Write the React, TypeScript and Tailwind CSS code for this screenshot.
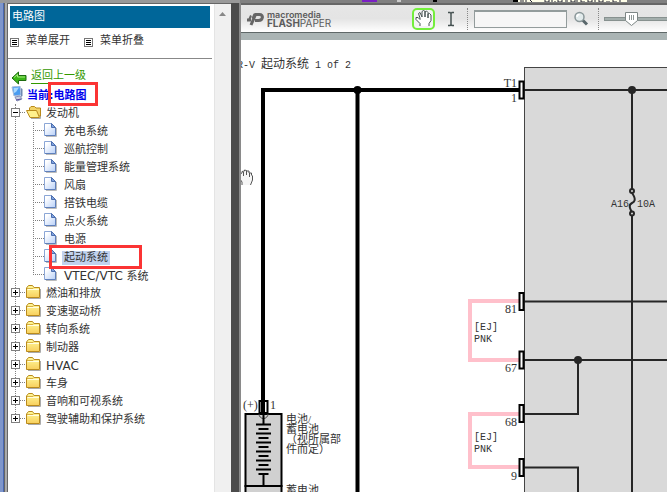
import { useState } from "react";
import clsx from "clsx";

const engineItems = [
  "充电系统",
  "巡航控制",
  "能量管理系统",
  "风扇",
  "搭铁电缆",
  "点火系统",
  "电源",
  "起动系统",
  "VTEC/VTC 系统",
];

const closedFolders = [
  "燃油和排放",
  "变速驱动桥",
  "转向系统",
  "制动器",
  "HVAC",
  "车身",
  "音响和可视系统",
  "驾驶辅助和保护系统",
];

export default function App() {
  const [selected, setSelected] = useState("起动系统");

  return (
    <div className="flex h-screen flex-col overflow-hidden bg-white font-['DejaVu_Sans','Noto_Sans_CJK_SC',sans-serif] text-[11px] text-[#333]">
      <TopStrip />
      <div className="flex min-h-0 flex-1">
        <div className="w-1 shrink-0 border-r border-[#4a68b0] bg-[#7f96cb]" />
        <div className="w-1 shrink-0 border-x border-[#666] bg-[#aaa]" />
        <Sidebar selected={selected} onSelect={setSelected} />
        <div className="w-2 shrink-0 bg-[#4b4b4b]" />
        <div className="w-0.5 shrink-0 bg-[#8a8a8a]" />
        <main className="flex min-w-0 flex-1 flex-col">
          <Toolbar />
          <div className="h-[7px] shrink-0 bg-[#aab4b4]" />
          <Diagram />
        </main>
      </div>
    </div>
  );
}

function TopStrip() {
  return (
    <div className="flex h-[3px] shrink-0 bg-[#999]">
      <div className="w-60 shrink-0" />
      <div className="flex flex-1 bg-[#808080]">
        <div className="ml-[122px] h-0.5 w-[15px] bg-[#7a1fc4]" />
        <div className="ml-5 h-0.5 w-1 bg-[#ccc]" />
        <div className="ml-8 h-0.5 w-1 bg-black" />
        <div className="ml-[76px] h-0.5 w-[5px] bg-black" />
        <svg className="h-0.5 w-[109px] bg-[#fffee8]">
          <path
            d="M2 1h4M8 0v2M12 0l2 2M27 0v2h4v-2M34 0v2M38 2h-2M40 0v2h4v-2M47 1h3M53 0v2h4v-2M59 0v2M63 0v2h4M70 0v2h4v-2M77 0v2M81 0v2h4v-2M88 2h4M95 0v2h4M102 0v2"
            stroke="#223"
            fill="none"
          />
        </svg>
      </div>
    </div>
  );
}

/* SIDEBAR */
function Sidebar({
  selected,
  onSelect,
}: {
  selected: string;
  onSelect: (label: string) => void;
}) {
  return (
    <aside className="flex w-[223px] shrink-0 border-t border-[#666]">
      <div className="min-w-0 flex-1">
        <h1 className="mx-0.5 mt-0.5 flex h-[22px] items-center bg-[#006699] pl-0.5 text-white">
          电路图
        </h1>
        <div className="flex h-[31px] items-center gap-3.5 border-b border-[#888] pb-1 pl-0.5">
          <MenuButton label="菜单展开" />
          <MenuButton label="菜单折叠" />
        </div>

        <nav className="relative pt-[9px] pl-[3px]">
          <a href="#back" className="flex h-[18px] items-center gap-1 text-[#339900]">
            <BackArrow />
            <span className="-mt-0.5 border-b border-[#339900] leading-[14px]">返回上一级</span>
          </a>
          <div className="relative flex h-[18px] items-center font-bold text-[#0000ee]">
            <Computer />
            <span className="pt-0.5">当前:电路图</span>
            <Highlight className="-top-1 left-[37px] h-6 w-[50px]" />
          </div>

          <ul className="relative">
            <li className="absolute top-0 bottom-2 left-1 border-l border-dotted border-[#808080]" aria-hidden />
            <li className="relative">
              <FolderRow label="发动机" open />
              <ul className="relative pl-[22px]">
                <li className="absolute top-0 bottom-[9px] left-[22px] border-l border-dotted border-[#808080]" aria-hidden />
                {engineItems.map((label) => (
                  <li key={label} className="relative flex h-[18px] items-center">
                    <span className="-mt-0.5 w-[11px] border-t border-dotted border-[#808080]" />
                    <FileIcon />
                    <a
                      href="#item"
                      onClick={() => onSelect(label)}
                      className={clsx(
                        "mt-0.5 ml-[5px] px-0.5 leading-[14px] whitespace-nowrap",
                        label === selected && "bg-[#c1d2ee]",
                      )}
                    >
                      <Label text={label} />
                    </a>
                    {label === "起动系统" && (
                      <Highlight className="-top-[3px] left-4 h-6 w-[93px]" />
                    )}
                  </li>
                ))}
              </ul>
            </li>
            {closedFolders.map((label) => (
              <li key={label} className="relative">
                <FolderRow label={label} />
              </li>
            ))}
          </ul>
        </nav>
      </div>
      <div className="ml-0.5 w-[17px] shrink-0 border-l border-[#e4e4e4] bg-[#f0f0f0] pt-2">
        <svg width="8" height="5" viewBox="0 0 8 5" className="ml-1">
          <path d="M0 4L3.5 0L7 4z" fill="#888" />
        </svg>
      </div>
    </aside>
  );
}

// latin words are drawn one pixel larger than the chinese text
function Label({ text }: { text: string }) {
  return (
    <>
      {text.split(/([A-Z/]+ ?[A-Z]*)/).map((part, i) =>
        /[A-Z]/.test(part) ? (
          <span key={i} className="text-xs leading-[14px]">
            {part}
          </span>
        ) : (
          part
        ),
      )}
    </>
  );
}

function Highlight({ className }: { className: string }) {
  return <span className={clsx("pointer-events-none absolute z-10 border-[3px] border-[#fb3434]", className)} />;
}

function MenuButton({ label }: { label: string }) {
  return (
    <button type="button" className="flex items-center gap-[7px]">
      <svg width="9" height="9" viewBox="0 0 9 9" className="mt-0.5">
        <rect x=".5" y=".5" width="8" height="8" fill="#fff" stroke="#777" />
        <path d="M2 2.5h5M2 4.5h5M2 6.5h5" stroke="#000" />
      </svg>
      {label}
    </button>
  );
}

function FolderRow({ label, open }: { label: string; open?: boolean }) {
  return (
    <div className="flex h-[18px] items-center">
      <button type="button" aria-label={label} aria-expanded={!!open} className="-mt-0.5">
        <svg width="9" height="9" viewBox="0 0 9 9">
          <rect x=".5" y=".5" width="8" height="8" fill="#fff" stroke="#808080" />
          <path d={open ? "M2 4.5h5" : "M2 4.5h5M4.5 2v5"} stroke="#000" />
        </svg>
      </button>
      <span className="mr-px -mt-0.5 w-[5px] border-t border-dotted border-[#808080]" />
      {open ? <FolderOpenIcon /> : <FolderIcon />}
      <a href="#folder" className="mt-0.5 ml-1 leading-[14px] whitespace-nowrap">
        <Label text={label} />
      </a>
    </div>
  );
}

function FolderIcon() {
  return (
    <svg width="16" height="16" viewBox="0 0 16 16" className="-mt-0.5">
      <defs>
        <linearGradient id="folder" x1="0" y1="0" x2="0" y2="1">
          <stop offset="0" stopColor="#fffa9c" />
          <stop offset="1" stopColor="#f8cf5c" />
        </linearGradient>
      </defs>
      <path d="M2 14.500h12.500V5" fill="none" stroke="#aaa" />
      <path d="M.5 13.500V4L2.500 1.500h4L8 3.500H13.500V13.500z" fill="url(#folder)" stroke="#b98a1c" />
      <path d="M1 4.500h6l1-1" fill="none" stroke="#d8b040" />
      <path d="M1.500 5.500h11.500" stroke="#fffde0" />
    </svg>
  );
}

function FolderOpenIcon() {
  return (
    <svg width="16" height="16" viewBox="0 0 16 16" className="-mt-0.5">
      <path d="M5 14.500h9.500V6" fill="none" stroke="#aaa" />
      <path d="M3.500 12V4L5 2.500h3.500L10 4H14.500V12z" fill="#f2d468" stroke="#b98a1c" />
      <path d="M.5 6.500H10.500L13.500 13.500H4z" fill="#fff08c" stroke="#b98a1c" />
    </svg>
  );
}

function FileIcon() {
  return (
    <svg width="13" height="16" viewBox="0 0 13 16" className="-mt-0.5">
      <defs>
        <linearGradient id="file" x1="0" y1="0" x2="1" y2="1">
          <stop offset="0.2" stopColor="#fff" />
          <stop offset="1" stopColor="#b8d0f8" />
        </linearGradient>
      </defs>
      <path d="M2 14.500h10.500V6" fill="none" stroke="#bbb" />
      <path d="M.5 1.500H7.500L11.500 5.500V13.500H.5z" fill="url(#file)" stroke="#8ba6d6" />
      <path d="M7.500 1.500V5.500H11.500z" fill="#7fa2e0" stroke="#4d6fae" />
      <path d="M11.500 6V13.500H1" fill="none" stroke="#5f80bc" />
    </svg>
  );
}

function BackArrow() {
  return (
    <svg width="16" height="14" viewBox="0 0 16 14" className="mt-0.5">
      <path d="M1 7L7.500 1V4.500H15V9.500H7.500V13z" fill="#3cb818" stroke="#1d6b10" />
      <path d="M3 6.500L6.500 3.500V6H14" fill="none" stroke="#a4ec7c" />
    </svg>
  );
}

function Computer() {
  return (
    <svg width="16" height="16" viewBox="0 0 16 16" className="-mt-0.5">
      <path d="M1 1L9 0L10 9L3 10z" fill="#4a9cf0" stroke="#a9bcd8" />
      <path d="M2.500 2L8 1.500L5 6L3 7z" fill="#a8d8ff" />
      <path d="M10 2l1.500 1v7l-1.500 1z" fill="#7088b0" />
      <path d="M4 11l5-1 2 3-5 2z" fill="#c9cfe0" stroke="#8791b8" />
      <path d="M5 14l5-1" stroke="#5a4c9c" />
    </svg>
  );
}

/* FLASHPAPER TOOLBAR */
function Toolbar() {
  return (
    <div className="flex h-[30px] shrink-0 items-center overflow-hidden border-t-2 border-b border-t-[#666] border-b-[#5f6868] bg-linear-to-b from-[#e6e6e6] via-[#e4e4e4] to-white">
      <svg width="18" height="16" viewBox="0 0 18 16" className="ml-1.5 shrink-0">
        <path
          d="M4 14L8.500 3.500H12.500C17 3.500 16 9.500 11.500 9.500H8"
          fill="none"
          stroke="#666"
          strokeWidth="3"
        />
        <path d="M4 4.500L2 9M7.500 3L5.500 7.500" stroke="#666" strokeWidth="2" />
        <path d="M0 9h4" stroke="#666" strokeWidth="3" />
      </svg>
      <div className="ml-0.5 w-[66px] shrink-0 font-['Inter',sans-serif] text-[#5c5c5c]">
        <div className="text-[9px] leading-[9px] font-semibold">macromedia</div>
        <div className="text-[10px] leading-[9px]">
          <b>FLASH</b>PAPER
        </div>
      </div>

      <button
        type="button"
        aria-label="Hand"
        className="ml-[79px] flex h-[22px] w-[23px] shrink-0 items-center justify-center rounded-[5px] border-2 border-[#74ee3c] bg-[#f4f4f4]"
      >
        <HandIcon />
      </button>
      <button type="button" aria-label="Select text" className="ml-3 shrink-0">
        <svg width="8" height="16" viewBox="0 0 8 16">
          <path d="M1 1.500h2l1 1 1-1h2M1 14.500h2l1-1 1 1h2M4 2.500v11" fill="none" stroke="#465252" strokeWidth="1.500" />
        </svg>
      </button>
      <span className="ml-3 h-[22px] shrink-0 border-l border-dotted border-[#888]" />
      <input
        type="text"
        aria-label="Find"
        className="ml-1.5 h-[18px] w-[93px] shrink-0 border border-t-2 border-[#939c9c] bg-[#f6f6f6] px-1 outline-none"
      />
      <button type="button" aria-label="Search" className="ml-1.5 shrink-0">
        <svg width="16" height="16" viewBox="0 0 16 16">
          <path d="M9.500 9L14 13.500" stroke="#59676b" strokeWidth="3" />
          <circle cx="6.500" cy="6" r="4.500" fill="#e2ebec" stroke="#8a9799" strokeWidth="1.500" />
          <path d="M4 6a2.500 2.500 0 0 1 2.500-2.500" fill="none" stroke="#fff" strokeWidth="1.500" />
        </svg>
      </button>
      <span className="ml-[9px] h-[22px] shrink-0 border-l border-dotted border-[#888]" />
      <div className="relative ml-[5px] flex w-24 shrink-0 items-center">
        <input
          type="range"
          aria-label="Zoom"
          defaultValue={27}
          className="h-1 w-full appearance-none border border-[#87918f] bg-[#a3aeac] outline-none [&::-webkit-slider-thumb]:h-3 [&::-webkit-slider-thumb]:w-3 [&::-webkit-slider-thumb]:appearance-none"
        />
        <svg width="13" height="14" viewBox="0 0 13 14" className="pointer-events-none absolute left-[21px]">
          <path d="M.5 .5h12v8l-6 5-6-5z" fill="#fff" stroke="#7d8685" />
          <path d="M4.500 3v5M6.500 3v5M8.500 3v5" stroke="#8d9695" />
        </svg>
      </div>
    </div>
  );
}

function HandIcon() {
  return (
    <svg width="17" height="17" viewBox="0 0 17 17">
      <path
        d="M5 16V13.500L1 9.500V7.500H3L5 9.500V8L3.500 3.500L5 2.500L7 7V1.500L8.500 .5L10 1.500V7V2L11.500 1L13 2.500V8V4L14.500 3.500L16 5V10.500L14 13.500V16"
        fill="#fff"
        stroke="#465252"
      />
    </svg>
  );
}

/* WIRING DIAGRAM */
function Diagram() {
  return (
    <svg className="min-h-0 w-full flex-1 bg-white font-['Liberation_Serif','Noto_Sans_CJK_SC',serif] text-xs">
      <rect x="283.500" y="27.500" width="1200" height="1200" fill="#d9d9d9" stroke="#444" />

      {/* supply wires */}
      <path d="M22 374V50H279M116.500 50V1200" fill="none" stroke="#000" strokeWidth="4" />
      <circle cx="116.500" cy="50" r="4" />

      {/* connections inside the box */}
      <g fill="none" stroke="#262626" strokeWidth="2">
        <path d="M283 50H1200M391 50V149M391 176V1200" />
        <path d="M283 261.500H1200M283 320H1200M337 320V374H283M283 427.500H337V1200" />
        <path d="M391 153C396 160 393 162 391 163C387 165 389 169 391 172" />
        <circle cx="391" cy="151" r="2" />
        <circle cx="391" cy="173.500" r="2" />
      </g>
      <g fill="#262626">
        <circle cx="391" cy="50" r="4" />
        <circle cx="337" cy="320" r="4" />
      </g>

      <path d="M279 261H229V320H279M279 374H229V427H279" fill="none" stroke="#ffc0cb" strokeWidth="4" />

      {[50, 261.5, 320, 373.5, 427.5].map((y) => (
        <rect key={y} x="278.500" y={y - 8.5} width="4" height="17" fill="#fff" stroke="#000" strokeWidth="2" />
      ))}

      {/* battery */}
      <rect x="18.500" y="361" width="8" height="12" fill="#fff" stroke="#000" strokeWidth="2" />
      <rect x="4.500" y="374" width="36" height="72" fill="#d0d0d0" stroke="#000" strokeWidth="2" />
      <rect x="4.500" y="446" width="36" height="72" fill="#d0d0d0" stroke="#000" strokeWidth="2" />
      <path d="M22 360V374" stroke="#000" strokeWidth="4" />
      <path d="M18 374a4.500 4.500 0 0 0 9 0" fill="none" stroke="#444" />
      <path d="M22.500 374V385M22.500 434V446" stroke="#000" strokeWidth="2" />
      {Array.from({ length: 12 }, (_, i) => {
        const half = i % 2 === 0 ? 7.5 : 5;
        const y = 384.5 + i * 4.5;
        return <path key={i} d={`M${22.5 - half} ${y}h${half * 2}`} stroke="#000" strokeWidth="2" />;
      })}

      <g fill="#333">
        <text x="-4" y="28" xmlSpace="preserve">
          <Mono>{"R-V "}</Mono>起动系统<Mono>{" 1 of 2"}</Mono>
        </text>
        <text x="276" y="47" textAnchor="end">T1</text>
        <text x="276" y="62" textAnchor="end">1</text>
        <text x="276" y="273" textAnchor="end">81</text>
        <text x="276" y="332" textAnchor="end">67</text>
        <text x="276" y="386" textAnchor="end">68</text>
        <text x="276" y="440" textAnchor="end">9</text>
        <text x="370" y="167"><Mono>A16</Mono></text>
        <text x="396" y="167"><Mono>10A</Mono></text>
        {[290, 400].map((y) => (
          <g key={y}>
            <text x="233" y={y}><Mono>[EJ]</Mono></text>
            <text x="233" y={y + 12}><Mono>PNK</Mono></text>
          </g>
        ))}
        <text x="2" y="369">(+)</text>
        <text x="29" y="369">1</text>
        <g className="text-[11px]">
          <text x="45" y="383">电池/</text>
          <text x="45" y="393">蓄电池</text>
          <text x="45" y="403">（视所属部</text>
          <text x="45" y="413">件而定）</text>
          <text x="45" y="454">蓄电池</text>
        </g>
      </g>

      {/* grab cursor */}
      <g transform="translate(-4 129)">
        <path
          d="M5 16V13L3 10V5L5 4V2.500L7.500 2V1L9.500 1.500V2L12 2V4L14.500 4V6L15.500 7V11L13.500 16"
          fill="#f6f6f6"
          stroke="#555"
        />
        <path d="M6.500 3v4M9.500 2v4M12.500 4v4" stroke="#555" />
      </g>
    </svg>
  );
}

function Mono({ children }: { children: React.ReactNode }) {
  return <tspan className="font-['Liberation_Mono',monospace] text-[10px]">{children}</tspan>;
}
